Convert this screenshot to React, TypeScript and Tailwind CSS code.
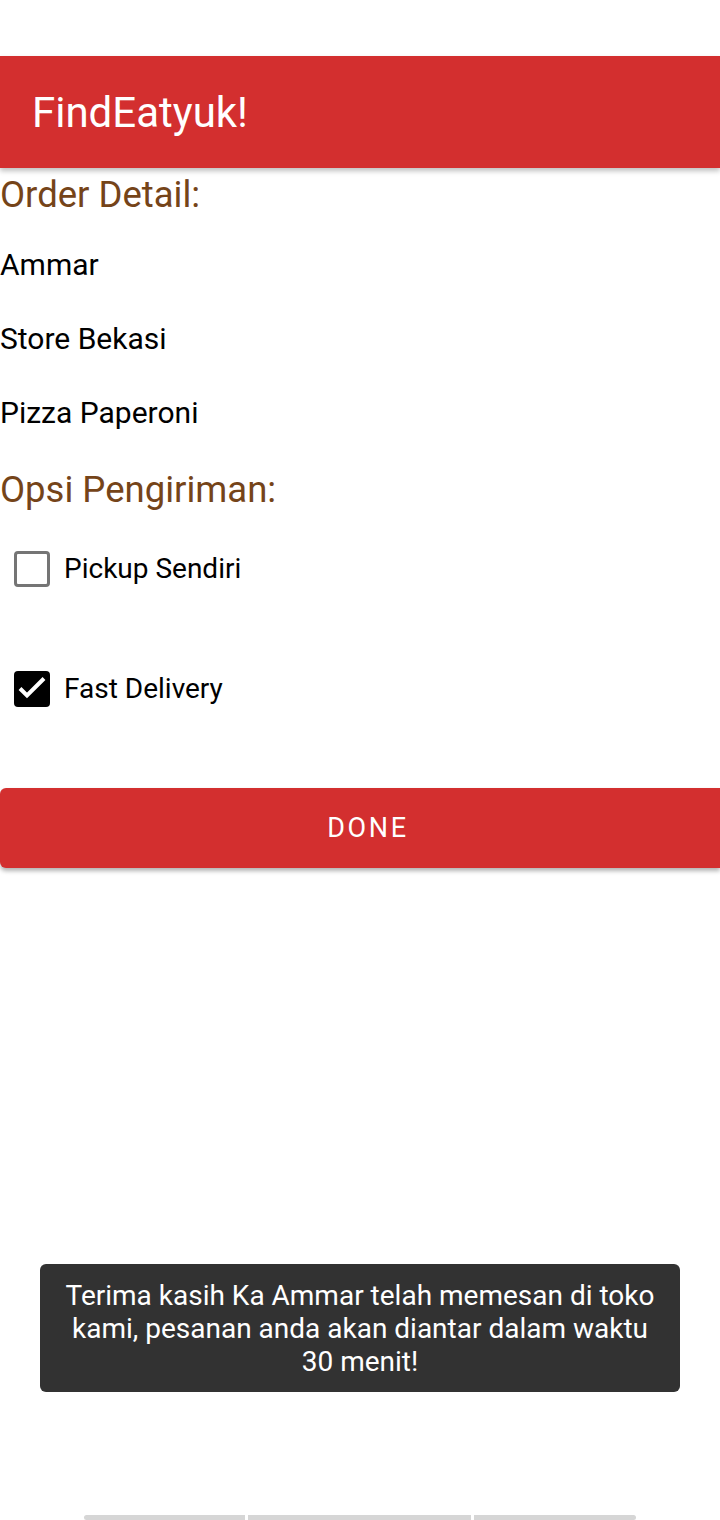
import React from "react";

const font = { fontFamily: "Roboto, 'Noto Sans', sans-serif" };

function CheckRow({ checked, label }: { checked: boolean; label: string }) {
  return (
    <div className="flex h-[76px] items-center">
      <div className="ml-[14px] flex h-9 w-9 items-center justify-center">
        {checked ? (
          <div className="h-9 w-9 rounded-[4px] bg-black">
            <svg width="36" height="36" viewBox="0 0 36 36" fill="none">
              <path d="M6 17.5l7 7L30 7.5" stroke="white" strokeWidth="4" strokeLinecap="butt" strokeLinejoin="miter" />
            </svg>
          </div>
        ) : (
          <div className="h-9 w-9 rounded-[4px] border-[3.5px] border-[#757575]" />
        )}
      </div>
      <span className="ml-[14px] text-[28px] text-black">{label}</span>
    </div>
  );
}

export default function App() {
  return (
    <div className="relative flex h-[1520px] w-[720px] flex-col bg-white" style={font}>
      <div className="h-14" />
      <div className="relative z-10 flex h-[112px] items-center bg-[#D32F2F] pl-8 shadow-[0_3px_5px_rgba(0,0,0,0.25)]">
        <span className="text-[42px] text-white">FindEatyuk!</span>
      </div>
      <div className="flex h-[54px] items-center text-[36.5px] text-[#754419]">Order Detail:</div>
      <div className="h-[5px]" />
      <div className="flex h-[74px] items-center text-[30px] text-black">Ammar</div>
      <div className="flex h-[74px] items-center text-[30px] text-black">Store Bekasi</div>
      <div className="flex h-[74px] items-center text-[30px] text-black">Pizza Paperoni</div>
      <div className="flex h-[82px] items-center text-[36.5px] text-[#754419]">Opsi Pengiriman:</div>
      <CheckRow checked={false} label="Pickup Sendiri" />
      <div className="h-[44px]" />
      <CheckRow checked={true} label="Fast Delivery" />
      <div className="h-[61px]" />
      <button className="flex h-20 w-full items-center justify-center rounded-l-[6px] bg-[#D32F2F] pl-4 text-[27px] tracking-[0.1em] text-white shadow-[0_3px_4px_rgba(0,0,0,0.3)]">
        DONE
      </button>
      <div className="h-[396px]" />
      <div className="mx-10 flex h-32 items-center justify-center rounded-[6px] bg-[#323232] px-6 text-center text-[28px] leading-[33px] text-white">
        Terima kasih Ka Ammar telah memesan di toko kami, pesanan anda akan diantar dalam waktu 30 menit!
      </div>
      <div className="flex-1" />
      <div className="flex h-[5px] pl-[84px]">
        <div className="h-[5px] w-[161px] rounded-l-full bg-[#d6d6d6]" />
        <div className="ml-[3px] h-[5px] w-[223px] bg-[#d6d6d6]" />
        <div className="ml-[3px] h-[5px] w-[162px] rounded-r-full bg-[#d6d6d6]" />
      </div>
    </div>
  );
}
